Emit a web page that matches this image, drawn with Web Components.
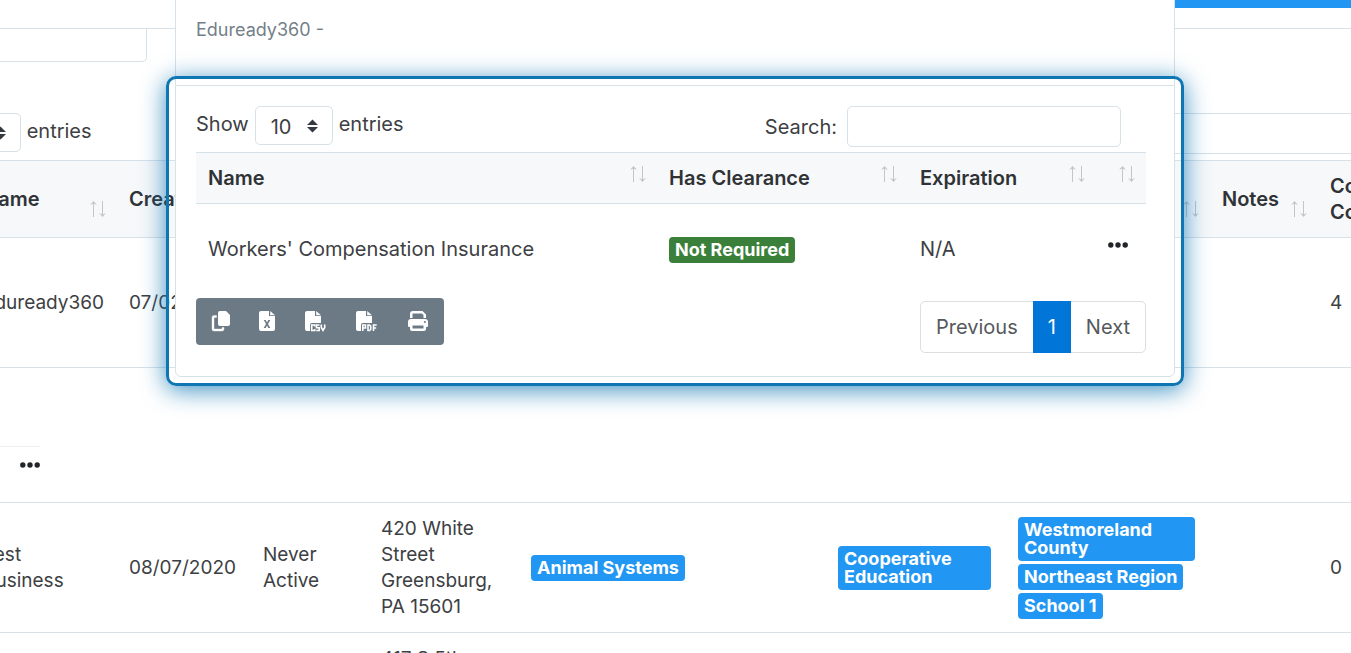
<!DOCTYPE html>
<html lang="en">
<head>
<meta charset="utf-8">
<meta name="viewport" content="width=device-width, initial-scale=1">
<title>Businesses</title>
<style>
    html, body {
        height: 100%;
    }
    body {
        margin: 0;
        overflow: hidden;
        font-family: Inter, "Open Sans", sans-serif;
        font-size: 19px;
        line-height: 26px;
        color: #3d4043;
        --line: #d6e1e8;
        --head: #f6f8fa;
        --ink: #303336;
    }
</style>
</head>
<body>
<business-page></business-page>

<script>
class SortArrows extends HTMLElement {
    constructor() {
        super();
        this.attachShadow({ mode: "open" });
        this.shadowRoot.innerHTML = `
            <style>
                :host {
                    display: block;
                    width: 18px;
                    height: 18px;
                }
                svg {
                    display: block;
                }
            </style>
            <svg width="18" height="18" viewBox="0 0 18 18" fill="none" stroke="#c3c5c7" aria-hidden="true">
                <path d="M4.5 17V2M13.5 1V16"></path>
                <path d="M1 5L4.500 1L8 5L4.500 3.500ZM10 13L13.500 14.500L17 13L13.500 17Z" fill="#c3c5c7" stroke="none"></path>
            </svg>
        `;
    }
}

class LabelBadge extends HTMLElement {
    constructor() {
        super();
        this.attachShadow({ mode: "open" });
        this.shadowRoot.innerHTML = `
            <style>
                :host {
                    display: inline-block;
                    box-sizing: border-box;
                    margin-right: 3px;
                    padding: 4px 6px;
                    border-radius: 4px;
                    background: #2196f3;
                    color: #fff;
                    font-size: 18px;
                    font-weight: 700;
                    line-height: 18px;
                    vertical-align: middle;
                }
                :host([tone="success"]) {
                    background: #3a7f3a;
                }
            </style>
            <slot></slot>
        `;
    }
}

class MoreButton extends HTMLElement {
    constructor() {
        super();
        this.attachShadow({ mode: "open" });
        this.shadowRoot.innerHTML = `
            <style>
                :host {
                    display: block;
                    width: 20px;
                    height: 6px;
                }
                button {
                    display: block;
                    padding: 0;
                    border: 0;
                    background: none;
                    cursor: pointer;
                }
                svg {
                    display: block;
                }
            </style>
            <button type="button" aria-label="More actions">
                <svg width="20" height="6" viewBox="0 0 20 6" fill="#212529">
                    <circle cx="2.8" cy="3" r="2.7"></circle>
                    <circle cx="10" cy="3" r="2.7"></circle>
                    <circle cx="17.2" cy="3" r="2.7"></circle>
                </svg>
            </button>
        `;
    }
}

class LengthPicker extends HTMLElement {
    constructor() {
        super();
        this.attachShadow({ mode: "open" });
        this.shadowRoot.innerHTML = `
            <style>
                :host {
                    display: block;
                }
                label {
                    display: flex;
                    gap: 6px;
                    font-size: 20px;
                    line-height: 36px;
                }
                .field {
                    display: grid;
                    align-items: center;
                }
                select, svg {
                    grid-area: 1 / 1;
                }
                select {
                    appearance: none;
                    box-sizing: border-box;
                    width: 78px;
                    height: 39px;
                    padding: 2px 15px 0;
                    border: 1px solid var(--line);
                    border-radius: 5px;
                    background: #fff;
                    color: #3d4043;
                    font: inherit;
                }
                svg {
                    justify-self: end;
                    margin-right: 15px;
                    pointer-events: none;
                }
            </style>
            <label>
                <span>Show</span>
                <span class="field">
                    <select>
                        <option>10</option>
                        <option>25</option>
                        <option>50</option>
                    </select>
                    <svg width="11" height="14" viewBox="0 0 11 14" fill="#343a40" aria-hidden="true">
                        <path d="M0 6L5.500 0.500L11 6ZM0 8H11L5.500 13.500Z"></path>
                    </svg>
                </span>
                <span>entries</span>
            </label>
        `;
    }
}

class ExportBar extends HTMLElement {
    constructor() {
        super();
        this.attachShadow({ mode: "open" });
        this.shadowRoot.innerHTML = `
            <style>
                :host {
                    display: inline-flex;
                    border-radius: 4px;
                    background: #6c7a86;
                }
                button {
                    box-sizing: border-box;
                    height: 47px;
                    padding: 0 15px;
                    border: 0;
                    background: none;
                    color: #fff;
                    cursor: pointer;
                }
                svg {
                    display: block;
                    overflow: visible;
                }
            </style>
            <button type="button" aria-label="Copy">
                <svg width="18" height="22" viewBox="0 0 18 22" fill="currentColor">
                    <path d="M9 1h6l4 4v9a2 2 0 0 1-2 2H9a2 2 0 0 1-2-2V3a2 2 0 0 1 2-2Z"></path>
                    <path d="M5.500 5.500H3a2 2 0 0 0-2 2V19a2 2 0 0 0 2 2h8a2 2 0 0 0 2-2v-1.500h-2V19H3V7.500h2.500Z" stroke="currentColor" stroke-width=".4"></path>
                </svg>
            </button>
            <button type="button" aria-label="Excel">
                <svg width="16" height="22" viewBox="0 0 16 22" fill="currentColor">
                    <path fill-rule="evenodd" d="M2 1h8v5h6v13a2 2 0 0 1-2 2H2a2 2 0 0 1-2-2V3a2 2 0 0 1 2-2Zm2.800 9L7 14l-2.300 4h2l1.300-2.500L9.300 18h2L9 14l2.300-4h-2L8 12.500 6.700 10Z"></path>
                    <path d="M11.200 1 16 5.200h-4.800Z"></path>
                </svg>
            </button>
            <button type="button" aria-label="CSV">
                <svg width="21" height="22" viewBox="0 0 21 22" fill="currentColor">
                    <path d="M2 1h8v5h6v7H7a2 2 0 0 0-2 2v6H2a2 2 0 0 1-2-2V3a2 2 0 0 1 2-2Z"></path>
                    <path d="M11.200 1 16 5.200h-4.800Z"></path>
                    <path d="M9.700 16.500V15H6.700v5.500h3V19M14.500 15h-3v2.700h2.700v2.800h-3M16.300 14.500v3l1.700 3 1.700-3v-3" fill="none" stroke="currentColor" stroke-width="1.600"></path>
                </svg>
            </button>
            <button type="button" aria-label="PDF">
                <svg width="21" height="22" viewBox="0 0 21 22" fill="currentColor">
                    <path d="M2 1h8v5h6v7H7a2 2 0 0 0-2 2v6H2a2 2 0 0 1-2-2V3a2 2 0 0 1 2-2Z"></path>
                    <path d="M11.200 1 16 5.200h-4.800Z"></path>
                    <path d="M6.800 21v-6h2.700v3H7M12 15h1.500l1.200 1v3.500l-1.200 1H12ZM17.500 21v-6h3.200M17.500 18h2.700" fill="none" stroke="currentColor" stroke-width="1.600"></path>
                </svg>
            </button>
            <button type="button" aria-label="Print">
                <svg width="22" height="22" viewBox="0 0 22 22" fill="currentColor">
                    <path d="M3 8V4a3 3 0 0 1 3-3h9.500L19 4.500V8h-2.500V5l-1.500-1.500H5.500V8Z"></path>
                    <path fill-rule="evenodd" d="M4 9h14a3 3 0 0 1 3 3v4a1 1 0 0 1-1 1h-1v2a2 2 0 0 1-2 2H5a2 2 0 0 1-2-2v-2H2a1 1 0 0 1-1-1v-4a3 3 0 0 1 3-3Zm1.500 6.500v3h11v-3ZM17.800 11a1 1 0 1 0 .1 2 1 1 0 0 0-.1-2Z"></path>
                </svg>
            </button>
        `;
    }
}

class PageLinks extends HTMLElement {
    constructor() {
        super();
        this.attachShadow({ mode: "open" });
        this.shadowRoot.innerHTML = `
            <style>
                :host {
                    display: block;
                }
                nav {
                    display: flex;
                    border: 1px solid #dcdfe2;
                    border-radius: 5px;
                }
                a {
                    padding: 12px 15px;
                    color: #55595c;
                    font-size: 20px;
                    line-height: 26px;
                    text-decoration: none;
                }
                a[aria-current] {
                    margin: -1px 0;
                    padding: 13px 15px;
                    background: #0275d8;
                    color: #fff;
                }
            </style>
            <nav aria-label="Pages">
                <a href="#previous">Previous</a>
                <a href="#1" aria-current="page">1</a>
                <a href="#next">Next</a>
            </nav>
        `;
    }
}

class BusinessTable extends HTMLElement {
    constructor() {
        super();
        this.attachShadow({ mode: "open" });
        this.shadowRoot.innerHTML = `
            <style>
                :host {
                    display: block;
                    margin: 0 -96px 0 -29px;
                }
                table {
                    width: 100%;
                    border-collapse: collapse;
                    table-layout: fixed;
                }
                th, td {
                    box-sizing: border-box;
                    padding: 12px;
                    border-top: 1px solid var(--line);
                    text-align: left;
                }
                th {
                    height: 77px;
                    border-bottom: 1px solid var(--line);
                    background: var(--head);
                    color: var(--ink);
                    font-size: 20px;
                    font-weight: 600;
                }
                .head {
                    display: flex;
                    justify-content: space-between;
                    align-items: center;
                    height: 26px;
                }
                sort-arrows {
                    margin: 20px -2px 0 0;
                }
                .row td {
                    height: 130px;
                }
                .child td {
                    height: 135px;
                    padding: 0 12px;
                    vertical-align: bottom;
                }
                .detail {
                    display: flex;
                    justify-content: flex-end;
                    box-sizing: border-box;
                    width: 57px;
                    height: 56px;
                    padding-top: 15px;
                    border-top: 1px solid #eceeef;
                }
                .labels {
                    display: flex;
                    flex-direction: column;
                    align-items: flex-start;
                    gap: 3px;
                }
            </style>
            <table>
                <colgroup>
                    <col style="width: 146px">
                    <col style="width: 134px">
                    <col style="width: 118px">
                    <col style="width: 150px">
                    <col style="width: 307px">
                    <col style="width: 180px">
                    <col style="width: 204px">
                    <col style="width: 108px">
                    <col>
                </colgroup>
                <thead>
                    <tr>
                        <th><div class="head">Name<sort-arrows></sort-arrows></div></th>
                        <th>Created</th>
                        <th></th>
                        <th></th>
                        <th></th>
                        <th></th>
                        <th><div class="head"><span></span><sort-arrows></sort-arrows></div></th>
                        <th><div class="head">Notes<sort-arrows></sort-arrows></div></th>
                        <th>Contact<br>Count</th>
                    </tr>
                </thead>
                <tbody>
                    <tr class="row">
                        <td>Eduready360</td>
                        <td>07/02/2020</td>
                        <td></td>
                        <td></td>
                        <td></td>
                        <td></td>
                        <td></td>
                        <td></td>
                        <td>4</td>
                    </tr>
                    <tr class="child">
                        <td colspan="9"><div class="detail"><more-button></more-button></div></td>
                    </tr>
                    <tr class="row">
                        <td>Test<br>Business</td>
                        <td>08/07/2020</td>
                        <td>Never Active</td>
                        <td>420 White Street Greensburg, PA 15601</td>
                        <td><label-badge>Animal Systems</label-badge></td>
                        <td><label-badge>Cooperative Education</label-badge></td>
                        <td>
                            <div class="labels">
                                <label-badge>Westmoreland County</label-badge>
                                <label-badge>Northeast Region</label-badge>
                                <label-badge>School 1</label-badge>
                            </div>
                        </td>
                        <td></td>
                        <td>0</td>
                    </tr>
                    <tr class="row">
                        <td></td>
                        <td></td>
                        <td></td>
                        <td>417 S 5th Street Youngwood, PA 15697</td>
                        <td></td>
                        <td></td>
                        <td></td>
                        <td></td>
                        <td></td>
                    </tr>
                </tbody>
            </table>
        `;
    }
}

class ClearanceCard extends HTMLElement {
    constructor() {
        super();
        this.attachShadow({ mode: "open" });
        this.shadowRoot.innerHTML = `
            <style>
                :host {
                    display: block;
                    font-size: 20px;
                }
                .title {
                    height: 85px;
                    box-sizing: border-box;
                    padding: 17px 20px;
                    border: 1px solid var(--line);
                    border-width: 0 1px;
                    background: #fff;
                    color: #747f89;
                    font-size: 18px;
                }
                .card {
                    padding: 20px 28px 23px 20px;
                    border: 1px solid var(--line);
                    border-radius: 0 0 6px 6px;
                    background: #fff;
                }
                .bar, .foot {
                    display: flex;
                    justify-content: space-between;
                }
                .bar {
                    padding-bottom: 5px;
                }
                .search {
                    display: flex;
                    align-items: center;
                    gap: 10px;
                    margin-right: 25px;
                }
                input {
                    box-sizing: border-box;
                    width: 274px;
                    height: 41px;
                    border: 1px solid var(--line);
                    border-radius: 5px;
                    font: inherit;
                }
                table {
                    width: 100%;
                    border-collapse: collapse;
                    table-layout: fixed;
                }
                th, td {
                    box-sizing: border-box;
                    padding: 0 12px;
                    text-align: left;
                }
                th {
                    height: 51px;
                    border: 1px solid var(--line);
                    border-width: 1px 0;
                    background: var(--head);
                    color: var(--ink);
                    font-weight: 600;
                }
                td {
                    height: 90px;
                }
                .head {
                    display: flex;
                    justify-content: space-between;
                    align-items: center;
                }
                sort-arrows {
                    margin: -8px -2px 0 0;
                }
                more-button {
                    margin-top: -7px;
                }
                .foot {
                    padding-top: 4px;
                    align-items: flex-start;
                }
                page-links {
                    margin-top: 3px;
                }
            </style>
            <div class="title">Eduready360 -</div>
            <div class="card">
                <div class="bar">
                    <length-picker></length-picker>
                    <label class="search">Search: <input type="search"></label>
                </div>
                <table>
                    <colgroup>
                        <col>
                        <col style="width: 251px">
                        <col style="width: 188px">
                        <col style="width: 50px">
                    </colgroup>
                    <thead>
                        <tr>
                            <th><div class="head">Name<sort-arrows></sort-arrows></div></th>
                            <th><div class="head">Has Clearance<sort-arrows></sort-arrows></div></th>
                            <th><div class="head">Expiration<sort-arrows></sort-arrows></div></th>
                            <th><div class="head"><span></span><sort-arrows></sort-arrows></div></th>
                        </tr>
                    </thead>
                    <tbody>
                        <tr>
                            <td>Workers' Compensation Insurance</td>
                            <td><label-badge tone="success">Not Required</label-badge></td>
                            <td>N/A</td>
                            <td><more-button></more-button></td>
                        </tr>
                    </tbody>
                </table>
                <div class="foot">
                    <export-bar></export-bar>
                    <page-links></page-links>
                </div>
            </div>
        `;
    }
}

class BusinessPage extends HTMLElement {
    constructor() {
        super();
        this.attachShadow({ mode: "open" });
        this.shadowRoot.innerHTML = `
            <style>
                :host {
                    display: block;
                    position: relative;
                    height: 100%;
                    overflow: hidden;
                }
                .strip {
                    height: 8px;
                    margin-left: 50%;
                    background: #2196f3;
                }
                .filters {
                    height: 33px;
                    margin-top: 20px;
                    border-top: 1px solid var(--line);
                }
                .filters input {
                    display: block;
                    box-sizing: border-box;
                    width: 176px;
                    height: 33px;
                    margin-left: -29px;
                    border: 1px solid var(--line);
                    border-top: 0;
                    border-radius: 0 0 5px 5px;
                }
                .bar {
                    display: flex;
                    justify-content: space-between;
                    padding: 51px 0 6px;
                }
                .bar length-picker {
                    margin-left: -116px;
                }
                .bar input {
                    box-sizing: border-box;
                    width: 274px;
                    height: 41px;
                    margin-right: -80px;
                    border: 1px solid var(--line);
                    border-radius: 5px;
                }
                .dialog {
                    position: absolute;
                    top: 0;
                    left: 175px;
                    right: 176px;
                }
                .focus {
                    position: absolute;
                    inset: 76px -9px -9px;
                    border: 3px solid #0d76b3;
                    border-radius: 10px;
                    box-shadow: 0 4px 24px rgba(13, 118, 179, 0.8);
                    pointer-events: none;
                }
            </style>
            <div class="strip"></div>
            <div class="filters"><input type="text" aria-label="Filter"></div>
            <div class="bar">
                <length-picker></length-picker>
                <input type="search" aria-label="Search businesses">
            </div>
            <business-table></business-table>
            <div class="dialog">
                <clearance-card></clearance-card>
                <div class="focus"></div>
            </div>
        `;
    }
}

customElements.define("sort-arrows", SortArrows);
customElements.define("label-badge", LabelBadge);
customElements.define("more-button", MoreButton);
customElements.define("length-picker", LengthPicker);
customElements.define("export-bar", ExportBar);
customElements.define("page-links", PageLinks);
customElements.define("business-table", BusinessTable);
customElements.define("clearance-card", ClearanceCard);
customElements.define("business-page", BusinessPage);
</script>
</body>
</html>
